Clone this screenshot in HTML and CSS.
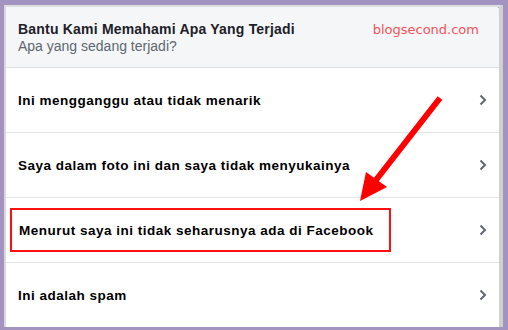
FILE: index.html
```html
<!DOCTYPE html>
<html>
<head>
<meta charset="utf-8">
<link rel="stylesheet" href="styles.css">
</head>
<body>
<div class="frame">
  <div class="card">
    <div class="header">
      <div class="titles">
        <div class="title">Bantu Kami Memahami Apa Yang Terjadi</div>
        <div class="subtitle">Apa yang sedang terjadi?</div>
      </div>
      <div class="watermark">blogsecond.com</div>
    </div>
    <div class="row"><span class="label">Ini mengganggu atau tidak menarik</span><svg class="chev" width="8" height="12" viewBox="0 0 8 12"><path d="M1.5 1.5 L6 6 L1.5 10.5" fill="none" stroke="#606770" stroke-width="2"/></svg></div>
    <div class="row"><span class="label">Saya dalam foto ini dan saya tidak menyukainya</span><svg class="chev" width="8" height="12" viewBox="0 0 8 12"><path d="M1.5 1.5 L6 6 L1.5 10.5" fill="none" stroke="#606770" stroke-width="2"/></svg></div>
    <div class="row marked"><span class="label">Menurut saya ini tidak seharusnya ada di Facebook</span><svg class="chev" width="8" height="12" viewBox="0 0 8 12"><path d="M1.5 1.5 L6 6 L1.5 10.5" fill="none" stroke="#606770" stroke-width="2"/></svg><div class="highlight"></div></div>
    <div class="row"><span class="label">Ini adalah spam</span><svg class="chev" width="8" height="12" viewBox="0 0 8 12"><path d="M1.5 1.5 L6 6 L1.5 10.5" fill="none" stroke="#606770" stroke-width="2"/></svg></div>
    <svg class="arrow" width="508" height="330" viewBox="0 0 508 330">
      <line x1="440" y1="98" x2="376" y2="180" stroke="#ff0000" stroke-width="6"/>
      <polygon points="360,201 366,172 387,187" fill="#ff0000"/>
    </svg>
  </div>
</div>
</body>
</html>
```
FILE: styles.css
```css
html, body {
  margin: 0;
  padding: 0;
}
body {
  background: #a393c0;
  padding: 5px 5px 3px 4px;
  width: 508px;
  height: 330px;
  box-sizing: border-box;
  overflow: hidden;
}
.frame {
  height: 322px;
  box-sizing: border-box;
  border-top: 2px solid #dedede;
  border-left: 2px solid #d9d9d9;
  border-right: 4px solid #d0d0d0;
  display: flex;
}
.card {
  flex: 1;
  background: #ffffff;
  border-top-right-radius: 3px;
  display: flex;
  flex-direction: column;
  overflow: hidden;
}
.header {
  height: 61px;
  box-sizing: border-box;
  background: #f5f6f7;
  border-bottom: 1px solid #dddfe2;
  padding: 13px 20px 0 12px;
  display: flex;
  justify-content: space-between;
  align-items: flex-start;
  flex: none;
}
.title {
  font-family: "Liberation Sans", Arial, sans-serif;
  font-weight: bold;
  font-size: 14px;
  letter-spacing: 0.2px;
  line-height: 18px;
  color: #1d2129;
}
.subtitle {
  font-family: "Liberation Sans", Arial, sans-serif;
  font-size: 14px;
  line-height: 17px;
  color: #606770;
}
.watermark {
  font-family: "DejaVu Sans", sans-serif;
  font-size: 13px;
  line-height: 18px;
  color: #f5515a;
  padding-top: 1px;
}
.row {
  position: relative;
  height: 65px;
  box-sizing: border-box;
  border-bottom: 1px solid #e4e5e8;
  padding: 0 12px 0 12px;
  display: flex;
  align-items: center;
  justify-content: space-between;
  flex: none;
}
.row:last-of-type {
  border-bottom: none;
  height: 64px;
}
.label {
  font-family: "Liberation Sans", Arial, sans-serif;
  font-weight: bold;
  font-size: 13.5px;
  letter-spacing: 0.5px;
  color: #000000;
}
.marked .label {
  padding-left: 1px;
}
.chev {
  display: block;
}
.highlight {
  position: absolute;
  left: 4px;
  top: 10px;
  width: 381px;
  height: 44px;
  box-sizing: border-box;
  border: 2px solid #ff1010;
  pointer-events: none;
}
.arrow {
  position: absolute;
  left: 0;
  top: 0;
  pointer-events: none;
}
```
